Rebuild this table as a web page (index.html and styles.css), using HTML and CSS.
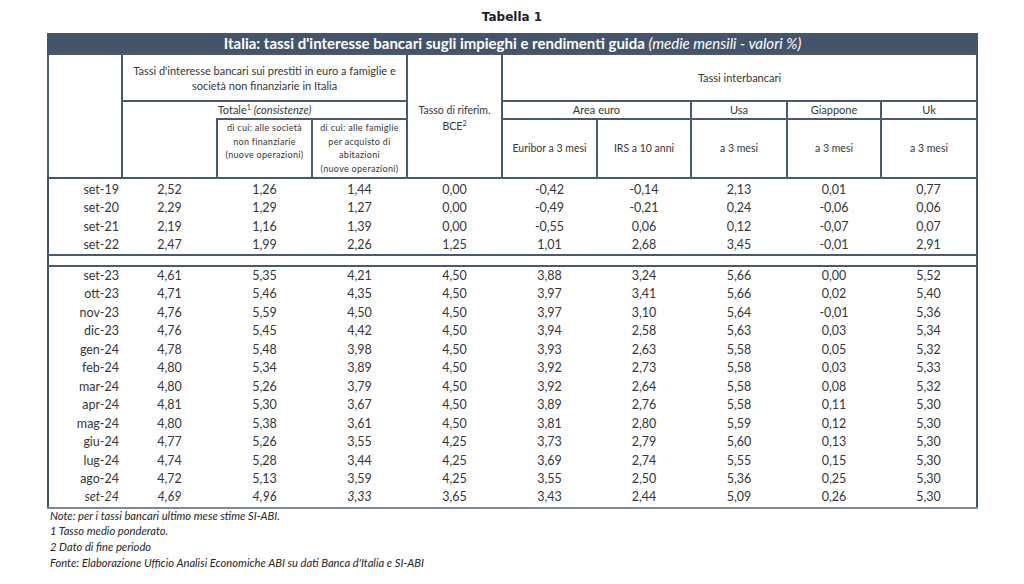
FILE: index.html
```html
<!DOCTYPE html>
<html lang="it">
<head>
<meta charset="utf-8">
<title>Tabella 1</title>
<link rel="stylesheet" href="styles.css">
</head>
<body>
<div class="page">
  <h1 class="title">Tabella 1</h1>
  <table class="rates">
    <colgroup>
      <col class="c-label"><col class="c-95"><col class="c-95"><col class="c-95"><col class="c-95"><col class="c-95"><col class="c-94"><col class="c-96"><col class="c-94"><col class="c-96">
    </colgroup>
    <thead>
      <tr class="banner">
        <th colspan="10">Italia: tassi d'interesse bancari sugli impieghi e rendimenti guida <em>(medie mensili - valori %)</em></th>
      </tr>
      <tr class="h1">
        <th rowspan="3" class="blank"></th>
        <th colspan="3" class="group">Tassi d'interesse bancari sui prestiti in euro a famiglie e<br>società non finanziarie in Italia</th>
        <th rowspan="3" class="bce">Tasso di riferim.<br>BCE<sup>2</sup></th>
        <th colspan="5" class="group">Tassi interbancari</th>
      </tr>
      <tr class="h2">
        <th colspan="3" class="totale">Totale<sup>1</sup> <em>(consistenze)</em></th>
        <th colspan="2">Area euro</th>
        <th>Usa</th>
        <th>Giappone</th>
        <th>Uk</th>
      </tr>
      <tr class="h3">
        <th class="notop"></th>
        <th class="small">di cui: alle società<br>non finanziarie<br>(nuove operazioni)</th>
        <th class="small">di cui: alle famiglie<br>per acquisto di<br>abitazioni<br>(nuove operazioni)</th>
        <th>Euribor a 3 mesi</th>
        <th>IRS a 10 anni</th>
        <th>a 3 mesi</th>
        <th>a 3 mesi</th>
        <th>a 3 mesi</th>
      </tr>
    </thead>
    <tbody class="first">
      <tr><td>set-19</td><td>2,52</td><td>1,26</td><td>1,44</td><td>0,00</td><td>-0,42</td><td>-0,14</td><td>2,13</td><td>0,01</td><td>0,77</td></tr>
      <tr><td>set-20</td><td>2,29</td><td>1,29</td><td>1,27</td><td>0,00</td><td>-0,49</td><td>-0,21</td><td>0,24</td><td>-0,06</td><td>0,06</td></tr>
      <tr><td>set-21</td><td>2,19</td><td>1,16</td><td>1,39</td><td>0,00</td><td>-0,55</td><td>0,06</td><td>0,12</td><td>-0,07</td><td>0,07</td></tr>
      <tr><td>set-22</td><td>2,47</td><td>1,99</td><td>2,26</td><td>1,25</td><td>1,01</td><td>2,68</td><td>3,45</td><td>-0,01</td><td>2,91</td></tr>
      <tr class="sep"><td colspan="10"></td></tr>
    </tbody>
    <tbody class="second">
      <tr><td>set-23</td><td>4,61</td><td>5,35</td><td>4,21</td><td>4,50</td><td>3,88</td><td>3,24</td><td>5,66</td><td>0,00</td><td>5,52</td></tr>
      <tr><td>ott-23</td><td>4,71</td><td>5,46</td><td>4,35</td><td>4,50</td><td>3,97</td><td>3,41</td><td>5,66</td><td>0,02</td><td>5,40</td></tr>
      <tr><td>nov-23</td><td>4,76</td><td>5,59</td><td>4,50</td><td>4,50</td><td>3,97</td><td>3,10</td><td>5,64</td><td>-0,01</td><td>5,36</td></tr>
      <tr><td>dic-23</td><td>4,76</td><td>5,45</td><td>4,42</td><td>4,50</td><td>3,94</td><td>2,58</td><td>5,63</td><td>0,03</td><td>5,34</td></tr>
      <tr><td>gen-24</td><td>4,78</td><td>5,48</td><td>3,98</td><td>4,50</td><td>3,93</td><td>2,63</td><td>5,58</td><td>0,05</td><td>5,32</td></tr>
      <tr><td>feb-24</td><td>4,80</td><td>5,34</td><td>3,89</td><td>4,50</td><td>3,92</td><td>2,73</td><td>5,58</td><td>0,03</td><td>5,33</td></tr>
      <tr><td>mar-24</td><td>4,80</td><td>5,26</td><td>3,79</td><td>4,50</td><td>3,92</td><td>2,64</td><td>5,58</td><td>0,08</td><td>5,32</td></tr>
      <tr><td>apr-24</td><td>4,81</td><td>5,30</td><td>3,67</td><td>4,50</td><td>3,89</td><td>2,76</td><td>5,58</td><td>0,11</td><td>5,30</td></tr>
      <tr><td>mag-24</td><td>4,80</td><td>5,38</td><td>3,61</td><td>4,50</td><td>3,81</td><td>2,80</td><td>5,59</td><td>0,12</td><td>5,30</td></tr>
      <tr><td>giu-24</td><td>4,77</td><td>5,26</td><td>3,55</td><td>4,25</td><td>3,73</td><td>2,79</td><td>5,60</td><td>0,13</td><td>5,30</td></tr>
      <tr><td>lug-24</td><td>4,74</td><td>5,28</td><td>3,44</td><td>4,25</td><td>3,69</td><td>2,74</td><td>5,55</td><td>0,15</td><td>5,30</td></tr>
      <tr><td>ago-24</td><td>4,72</td><td>5,13</td><td>3,59</td><td>4,25</td><td>3,55</td><td>2,50</td><td>5,36</td><td>0,25</td><td>5,30</td></tr>
      <tr class="estimate"><td>set-24</td><td>4,69</td><td>4,96</td><td>3,33</td><td>3,65</td><td>3,43</td><td>2,44</td><td>5,09</td><td>0,26</td><td>5,30</td></tr>
    </tbody>
  </table>
  <div class="notes">
    <p>Note: per i tassi bancari ultimo mese stime SI-ABI.</p>
    <p>1 Tasso medio ponderato.</p>
    <p>2 Dato di fine periodo</p>
    <p>Fonte: Elaborazione Ufficio Analisi Economiche ABI su dati Banca d'Italia e SI-ABI</p>
  </div>
</div>
</body>
</html>
```
FILE: styles.css
```css
html, body {
  margin: 0;
  padding: 0;
  background: #ffffff;
}

body {
  font-family: Lato, "Open Sans", "Liberation Sans", sans-serif;
  color: #363636;
}

.page {
  padding: 0 47px 0 47px;
  width: 930px;
}

.title {
  margin: 0;
  height: 33px;
  padding-top: 10px;
  box-sizing: border-box;
  font-family: "DejaVu Sans", Verdana, sans-serif;
  font-size: 12px;
  font-weight: bold;
  line-height: 14px;
  text-align: center;
  color: #1e1e1e;
}

.rates {
  width: 930px;
  table-layout: fixed;
  border-collapse: collapse;
  border-left: 2px solid #44546a;
  border-right: 2px solid #44546a;
  border-bottom: 2px solid #7c8799;
}

.c-label { width: 74px; }
.c-95 { width: 95px; }
.c-94 { width: 94px; }
.c-96 { width: 96px; }

.rates th {
  font-weight: normal;
  font-size: 10.5px;
  line-height: 15px;
  padding: 0;
  border: 2px solid #4b596e;
  vertical-align: middle;
  text-align: center;
  color: #363636;
}

.rates sup {
  font-size: 7px;
  line-height: 0;
  vertical-align: 4px;
}

.banner th {
  background: #44546a;
  color: #ffffff;
  font-weight: bold;
  font-size: 15px;
  height: 20px;
  line-height: 20px;
  border: none;
  border-left: 2px solid #44546a;
  border-right: 2px solid #44546a;
}

.banner em {
  font-weight: normal;
}

.h1 th {
  height: 45px;
}

.h1 .group {
  font-size: 11px;
}

.h1 .blank {
  border-bottom: 2px solid #44546a;
}

.h1 .bce {
  line-height: 16px;
  padding-top: 4px;
}

.h2 th {
  height: 16px;
  line-height: 16px;
  font-size: 11px;
}

.h2 .totale {
  border-bottom: none;
}

.h3 th {
  height: 56px;
}

.h3 .notop {
  border-top: none;
}

.h3 .small {
  font-size: 9px;
  line-height: 13.5px;
  letter-spacing: 0.3px;
  vertical-align: top;
  padding-top: 1px;
}

.rates td {
  padding: 0;
  height: 18.46px;
  font-size: 12.5px;
  line-height: 16px;
  text-align: center;
  color: #363636;
  border: none;
}

.first td {
  height: 16.6px;
  padding-top: 2px;
}

.first tr:first-child td {
  height: 15.4px;
  padding-top: 3px;
}

.rates td:first-child {
  text-align: right;
  padding-right: 3px;
}

.rates tr.sep td {
  height: 9px;
  padding: 0;
  border-top: 2px solid #4b596e;
  border-bottom: 2px solid #4b596e;
}

.estimate td:nth-child(-n+4) {
  font-style: italic;
}

.notes {
  margin-top: -1px;
  padding-left: 3px;
}

.notes p {
  margin: 0;
  font-size: 11.2px;
  line-height: 15.8px;
  font-style: italic;
  color: #262626;
}
```
